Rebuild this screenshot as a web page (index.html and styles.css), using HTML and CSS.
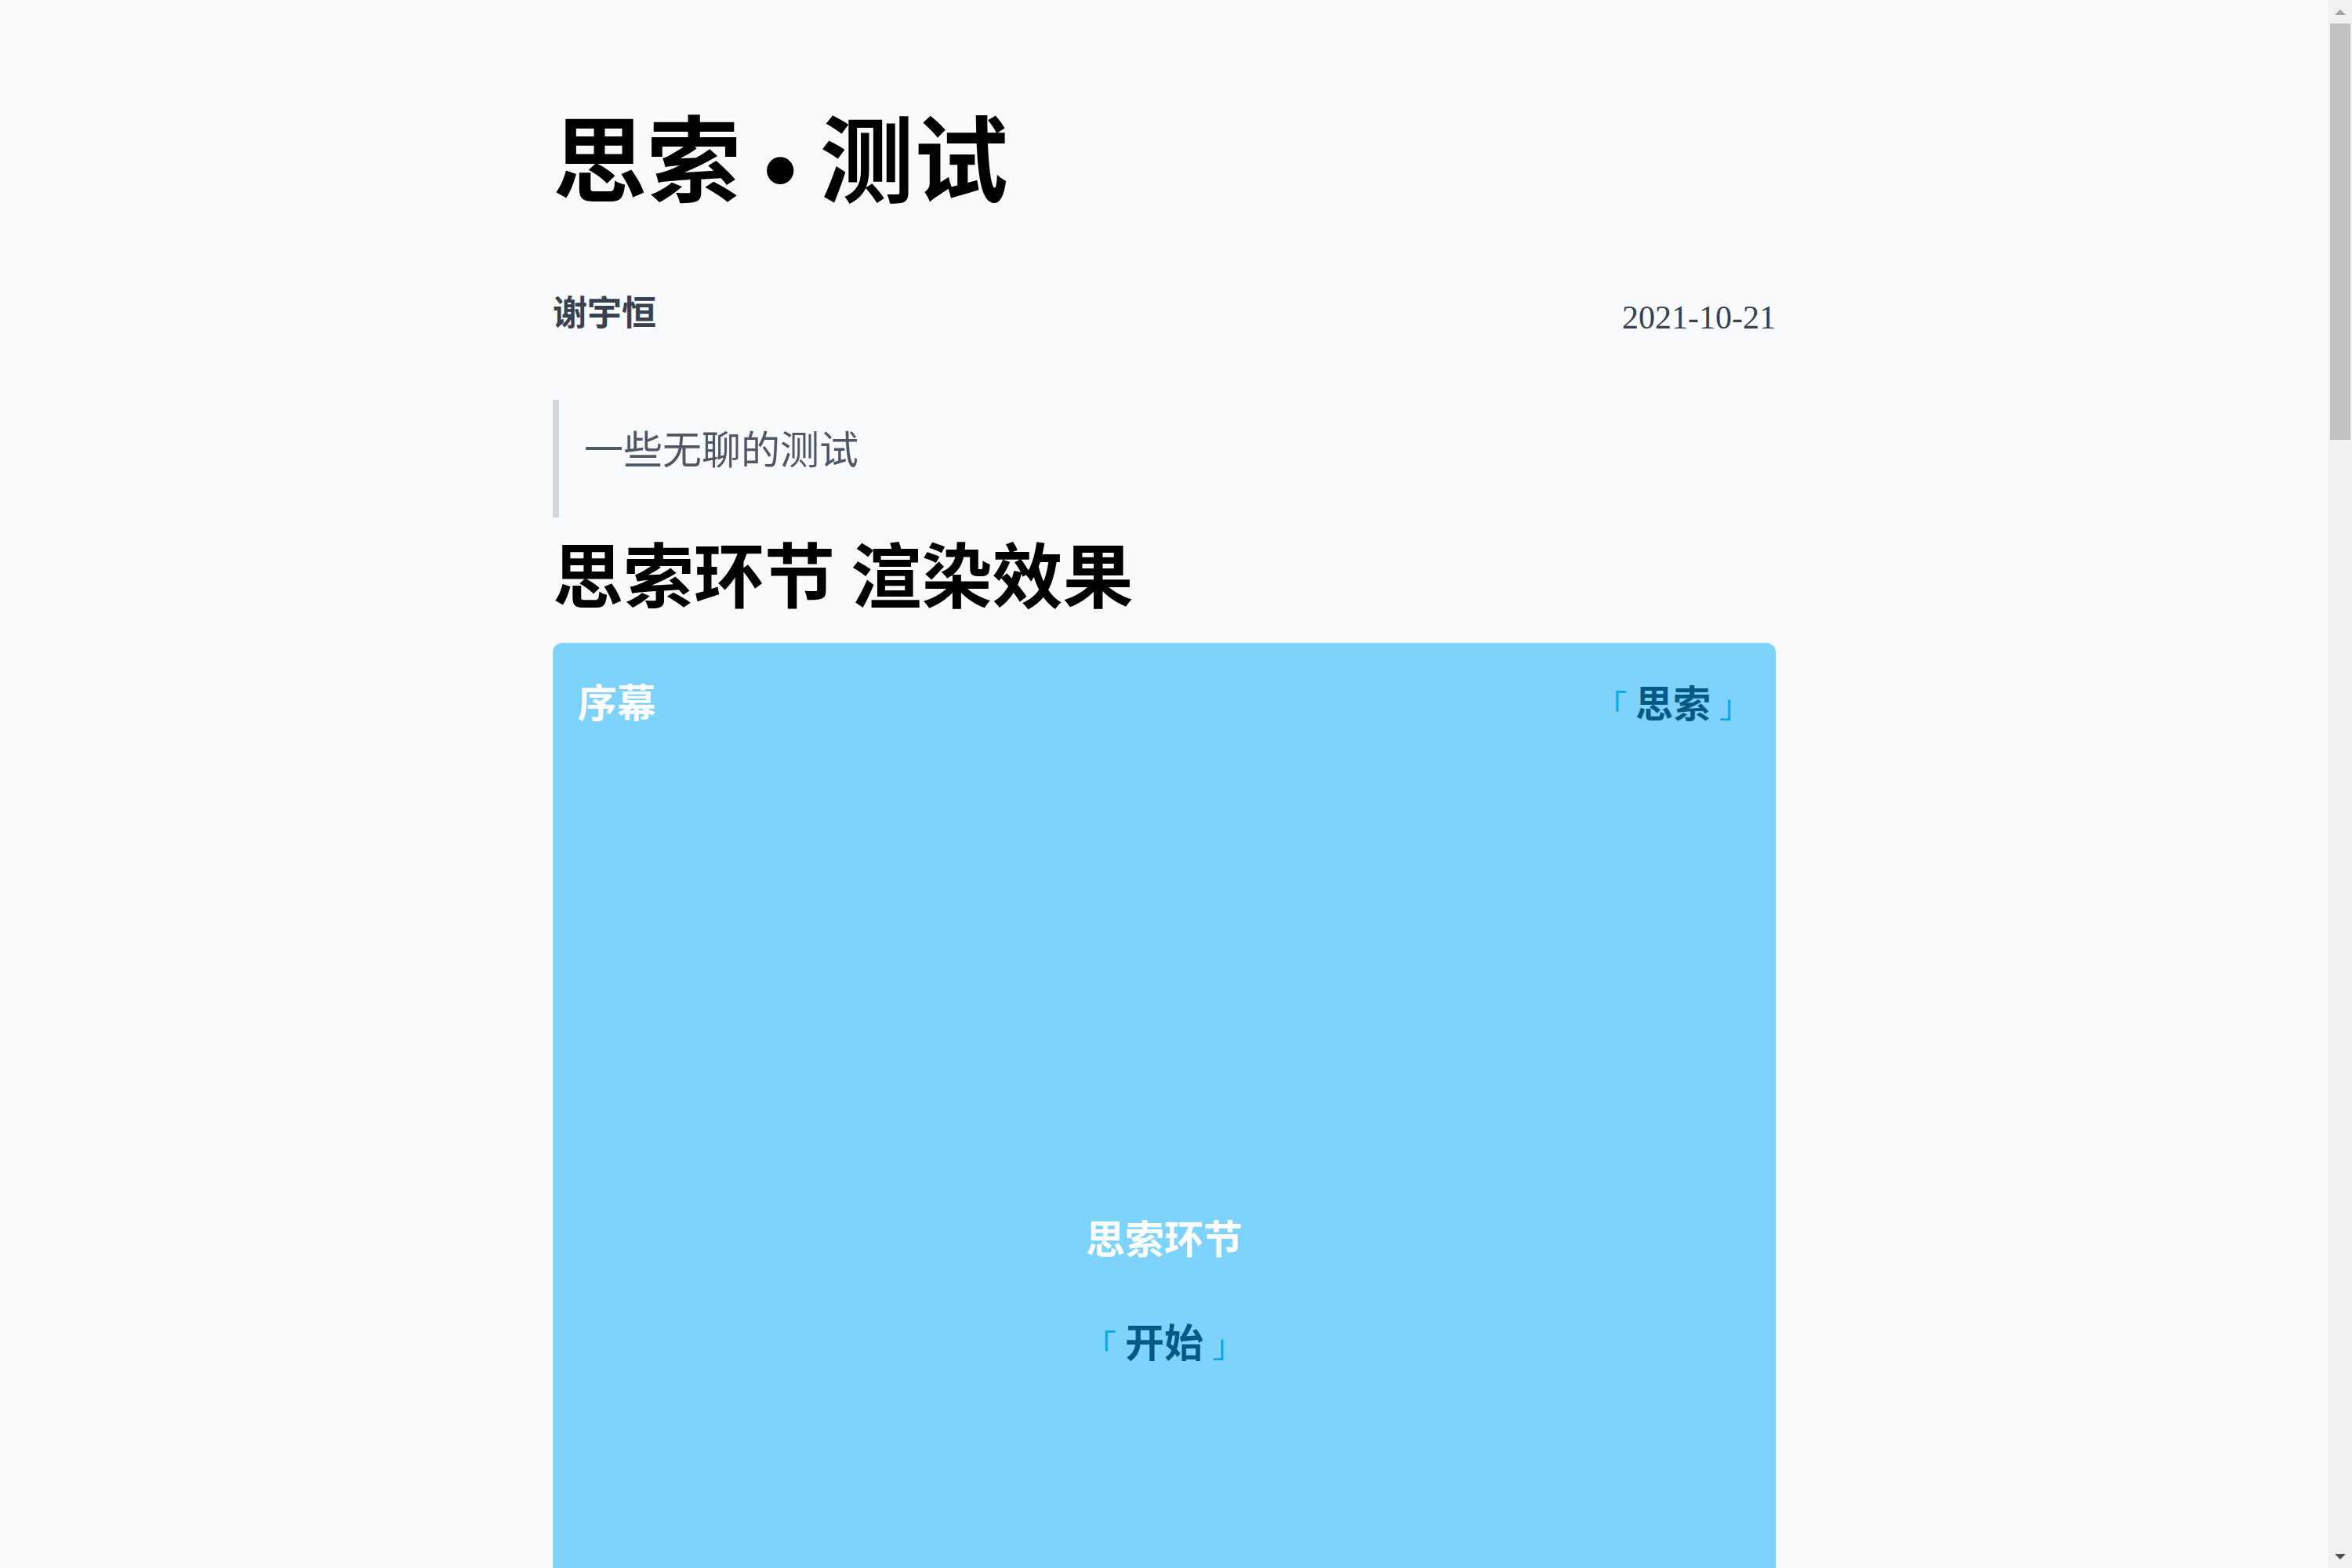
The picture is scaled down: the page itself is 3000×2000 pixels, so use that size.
FILE: index.html
```html
<!DOCTYPE html>
<html lang="zh-CN">
<head>
<meta charset="utf-8">
<title>思索 · 测试</title>
<link rel="stylesheet" href="styles.css">
</head>
<body>
<main class="page">
  <article class="post">
    <h1 class="post-title">思索<span class="sep"> • </span>测试</h1>
    <div class="post-meta">
      <span class="author">谢宇恒</span>
      <time class="date" datetime="2021-10-21">2021-10-21</time>
    </div>
    <blockquote class="summary"><p>一些无聊的测试</p></blockquote>
    <h2 class="section-title">思索环节 渲染效果</h2>
    <section class="scene">
      <header class="scene-head">
        <span class="scene-name">序幕</span>
        <span class="scene-tag"><span class="bracket open">「</span> 思索 <span class="bracket close">」</span></span>
      </header>
      <div class="scene-body">
        <p class="scene-title">思索环节</p>
        <p class="scene-action"><span class="bracket open">「</span> 开始 <span class="bracket close">」</span></p>
      </div>
    </section>
  </article>
</main>
<div class="scrollbar" aria-hidden="true">
  <div class="sb-button sb-up"><span class="sb-arrow-up"></span></div>
  <div class="sb-track"><div class="sb-thumb"></div></div>
  <div class="sb-button sb-down"><span class="sb-arrow-down"></span></div>
</div>
</body>
</html>
```

FILE: styles.css
```css
html {
  background: #f9fafb;
}
body {
  margin: 0;
  padding-right: 30px;
  background: #f9fafb;
  font-family: "Noto Sans CJK SC", "Noto Sans", sans-serif;
  color: #111827;
}

.page {
  width: 1560px;
  margin: 0 auto;
  padding: 125px 0 200px;
}

.post-title {
  margin: 0;
  font-size: 120px;
  line-height: 144px;
  font-weight: 700;
  color: #000;
}
.sep {
  font-family: "Liberation Sans", sans-serif;
  font-weight: 700;
  line-height: 0;
  word-spacing: -4px;
  position: relative;
  top: 8px;
}

.post-meta {
  display: flex;
  justify-content: space-between;
  align-items: flex-end;
  margin-top: 97px;
}
.author {
  font-size: 44px;
  line-height: 60px;
  font-weight: 700;
  color: #374151;
}
.date {
  font-family: "Liberation Serif", serif;
  font-size: 42px;
  line-height: 42px;
  color: #374151;
}

.summary {
  margin: 84px 0 0;
  border-left: 8px solid #d1d5db;
  padding: 28px 0 47px 32px;
}
.summary p {
  margin: 0;
  font-family: "Liberation Serif", serif;
  font-size: 50px;
  line-height: 75px;
  font-weight: 300;
  color: #4f5866;
}

.section-title {
  margin: 15px 0 0;
  font-size: 90px;
  line-height: 108px;
  font-weight: 700;
  color: #000;
}

.scene {
  margin-top: 37px;
  background: #7dd3fc;
  border-radius: 12px;
  min-height: 1660px;
  padding: 36px 32px 0;
  box-sizing: border-box;
}
.scene-head {
  display: flex;
  justify-content: space-between;
  align-items: baseline;
}
.scene-name {
  font-size: 50px;
  line-height: 75px;
  font-weight: 700;
  color: #ffffff;
}
.scene-tag {
  font-size: 48px;
  line-height: 75px;
  font-weight: 700;
  color: #075985;
}
.bracket {
  font-size: 40px;
  font-weight: 400;
  color: #0ea5e9;
}

.scene-body {
  margin-top: 604px;
  text-align: center;
}
.scene-title {
  margin: 0;
  font-size: 50px;
  line-height: 75px;
  font-weight: 700;
  color: #ffffff;
}
.scene-action {
  margin: 57px 0 0;
  font-size: 50px;
  line-height: 75px;
  font-weight: 700;
  color: #075985;
}

/* drawn browser scrollbar, as in the reference capture */
.scrollbar {
  position: fixed;
  top: 0;
  right: 0;
  width: 30px;
  height: 100vh;
  background: #f1f1f1;
  display: flex;
  flex-direction: column;
}
.sb-button {
  height: 30px;
  flex: none;
  display: flex;
  align-items: center;
  justify-content: center;
}
.sb-arrow-up {
  width: 0;
  height: 0;
  border-left: 7px solid transparent;
  border-right: 7px solid transparent;
  border-bottom: 7px solid #a3a3a3;
}
.sb-arrow-down {
  width: 0;
  height: 0;
  border-left: 7px solid transparent;
  border-right: 7px solid transparent;
  border-top: 7px solid #505050;
}
.sb-track {
  flex: 1;
  padding: 0 2px;
}
.sb-thumb {
  height: 531px;
  background: #c1c1c1;
}
```
